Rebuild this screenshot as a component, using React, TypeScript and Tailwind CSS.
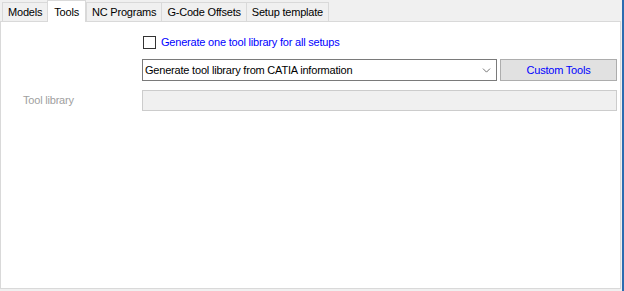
import { ChevronDown } from "lucide-react";

const tabs = ["Models", "Tools", "NC Programs", "G-Code Offsets", "Setup template"];

export default function App() {
  return (
    <div
      className="flex h-[291px] w-[624px] bg-[#f0f0f0] text-[11px] tracking-[-0.2px] text-black"
      style={{ fontFamily: '"Liberation Sans", Arial, sans-serif' }}
    >
      <div className="flex flex-1 flex-col pb-[2px]">
        {/* Tab strip */}
        <div className="flex h-[21px] items-end pl-[2px]">
          {tabs.map((t) =>
            t === "Tools" ? (
              <div
                key={t}
                className="relative z-10 -mb-px flex h-[22px] items-start border border-b-0 border-[#d9d9d9] bg-white px-[6px] pt-[3px]"
              >
                {t}
              </div>
            ) : (
              <div
                key={t}
                className="flex h-[19px] items-center border border-r-0 border-b-0 border-[#d9d9d9] bg-[#f0f0f0] px-[5px] pt-[1px] last:border-r"
              >
                {t}
              </div>
            )
          )}
        </div>

        {/* Panel */}
        <div className="flex flex-1 flex-col border border-[#d9d9d9] bg-white pt-[12px] pr-[3px]">
          <label className="ml-[142px] flex h-[16px] items-center gap-[5px] text-[#0000ff]">
            <span className="h-[13px] w-[13px] border border-[#333333] bg-white" />
            Generate one tool library for all setups
          </label>

          <div className="mt-[9px] ml-[141px] flex gap-[3px]">
            <div className="flex h-[22px] w-[355px] items-center justify-between border border-[#7a7a7a] bg-white pl-[2px] pr-[3px]">
              <span>Generate tool library from CATIA information</span>
              <ChevronDown size={13} strokeWidth={1.5} className="text-[#555]" />
            </div>
            <div className="flex h-[22px] flex-1 items-center justify-center border border-[#adadad] bg-[#e1e1e1] text-[#0000ff]">
              Custom Tools
            </div>
          </div>

          <div className="mt-[9px] flex items-center">
            <span className="w-[141px] pl-[22px] text-[#a0a0a0]">Tool library</span>
            <div className="h-[21px] flex-1 border border-[#cccccc] bg-[#f0f0f0]" />
          </div>
        </div>
      </div>
      <div className="w-[3px] bg-[#f0f0f0]">
        <div className="ml-[1px] h-full w-[2px] bg-[#2b6cb0]" />
      </div>
    </div>
  );
}
